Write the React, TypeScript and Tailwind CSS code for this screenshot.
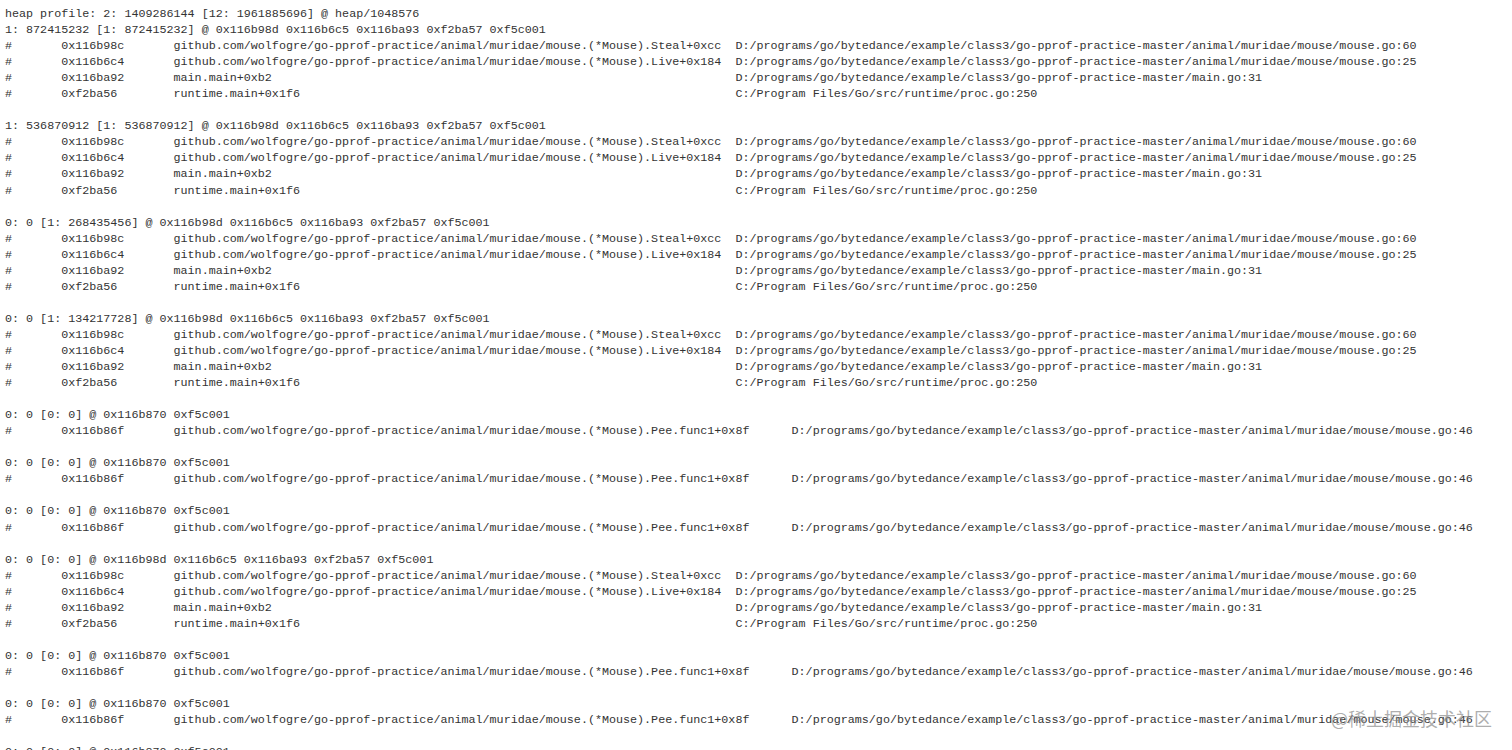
const steal = [
  ["0x116b98c", "github.com/wolfogre/go-pprof-practice/animal/muridae/mouse.(*Mouse).Steal+0xcc", "D:/programs/go/bytedance/example/class3/go-pprof-practice-master/animal/muridae/mouse/mouse.go:60"],
  ["0x116b6c4", "github.com/wolfogre/go-pprof-practice/animal/muridae/mouse.(*Mouse).Live+0x184", "D:/programs/go/bytedance/example/class3/go-pprof-practice-master/animal/muridae/mouse/mouse.go:25"],
  ["0x116ba92", "main.main+0xb2", "D:/programs/go/bytedance/example/class3/go-pprof-practice-master/main.go:31"],
  ["0xf2ba56", "runtime.main+0x1f6", "C:/Program Files/Go/src/runtime/proc.go:250"],
]

const pee = [
  ["0x116b86f", "github.com/wolfogre/go-pprof-practice/animal/muridae/mouse.(*Mouse).Pee.func1+0x8f", "D:/programs/go/bytedance/example/class3/go-pprof-practice-master/animal/muridae/mouse/mouse.go:46"],
]

const blocks = [
  { head: "1: 872415232 [1: 872415232] @ 0x116b98d 0x116b6c5 0x116ba93 0xf2ba57 0xf5c001", frames: steal },
  { head: "1: 536870912 [1: 536870912] @ 0x116b98d 0x116b6c5 0x116ba93 0xf2ba57 0xf5c001", frames: steal },
  { head: "0: 0 [1: 268435456] @ 0x116b98d 0x116b6c5 0x116ba93 0xf2ba57 0xf5c001", frames: steal },
  { head: "0: 0 [1: 134217728] @ 0x116b98d 0x116b6c5 0x116ba93 0xf2ba57 0xf5c001", frames: steal },
  { head: "0: 0 [0: 0] @ 0x116b870 0xf5c001", frames: pee },
  { head: "0: 0 [0: 0] @ 0x116b870 0xf5c001", frames: pee },
  { head: "0: 0 [0: 0] @ 0x116b870 0xf5c001", frames: pee },
  { head: "0: 0 [0: 0] @ 0x116b98d 0x116b6c5 0x116ba93 0xf2ba57 0xf5c001", frames: steal },
  { head: "0: 0 [0: 0] @ 0x116b870 0xf5c001", frames: pee },
  { head: "0: 0 [0: 0] @ 0x116b870 0xf5c001", frames: pee },
  { head: "0: 0 [0: 0] @ 0x116b870 0xf5c001", frames: [] },
]

// same text layout as pprof's tabwriter output
function frameLine(frame: string[], width: number) {
  return "#".padEnd(8) + frame[0].padEnd(16) + frame[1].padEnd(width) + frame[2]
}

export default function App() {
  return (
    <div className="relative h-[750px] overflow-hidden bg-white">
      <pre className="pl-[5px] pt-[6px] font-['Liberation_Mono',monospace] text-[11.71px] leading-[16.05px] text-[#333333]">
        <div>heap profile: 2: 1409286144 [12: 1961885696] @ heap/1048576</div>
        {blocks.map((block, i) => (
          <div key={i} className="mb-[16.05px]">
            <div>{block.head}</div>
            {block.frames.map((frame) => (
              <div key={frame[0]}>{frameLine(frame, block.frames === pee ? 88 : 80)}</div>
            ))}
          </div>
        ))}
      </pre>
      {/* juejin watermark */}
      <div className="absolute left-[1331px] top-[706px] font-['Noto_Sans_CJK_SC',sans-serif] text-[18px] leading-[24px] text-[#8a8a8a]/70">
        @稀土掘金技术社区
      </div>
    </div>
  )
}
